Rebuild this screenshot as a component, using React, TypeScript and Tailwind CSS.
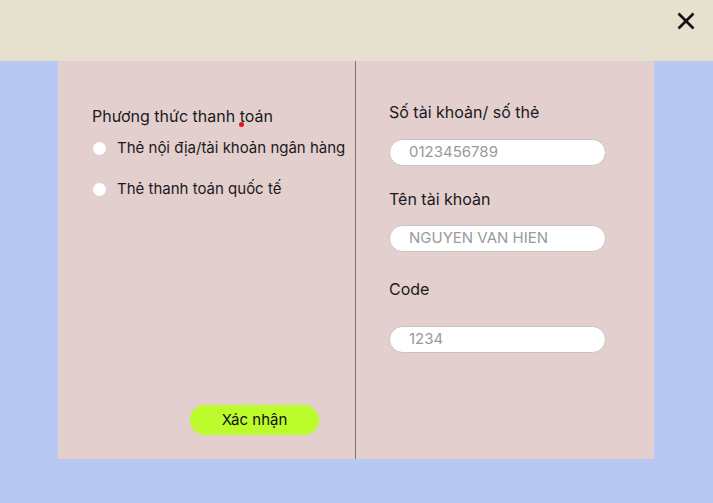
export default function App() {
  return (
    <div
      className="flex h-[503px] w-[713px] flex-col bg-[#b7c9f3] text-[#1a1a1a]"
      style={{ fontFamily: "Inter, 'Noto Sans', sans-serif" }}
    >
      <header className="flex h-[61px] shrink-0 justify-end bg-[#e6e0ce] pr-[17px] pt-[11px]">
        <button type="button" aria-label="Đóng" className="h-[20px] w-[20px] text-[#111]">
          <svg viewBox="0 0 20 20" className="h-[20px] w-[20px]" fill="none" stroke="currentColor" strokeWidth="2.6">
            <path d="M2.5 2.5 17.5 17.5" />
            <path d="M17.5 2.5 2.5 17.5" />
          </svg>
        </button>
      </header>

      <main className="mx-[58px] flex h-[398px] w-[596px] bg-[#e4cfcf]">
        <section className="relative flex w-[297px] flex-col pl-[34px] pt-[46px]">
          <h2 className="text-[16px] leading-[19px]">Phương thức thanh toán</h2>
          <span className="absolute left-[181px] top-[61px] h-[5px] w-[5px] rounded-full bg-[#e8141b]" />

          <label className="mt-[13px] flex items-center text-[15px] leading-[18px]">
            <span className="ml-[1px] h-[13px] w-[13px] rounded-full bg-white" />
            <span className="ml-[11px]">Thẻ nội địa/tài khoản ngân hàng</span>
          </label>
          <label className="mt-[23px] flex items-center text-[15px] leading-[18px]">
            <span className="ml-[1px] h-[13px] w-[13px] rounded-full bg-white" />
            <span className="ml-[11px]">Thẻ thanh toán quốc tế</span>
          </label>

          <button
            type="button"
            className="ml-[98px] mt-auto mb-[24px] h-[30px] w-[129px] rounded-full bg-[#bcfb2c] text-[15px] text-[#111]"
          >
            Xác nhận
          </button>
        </section>

        <div className="w-px bg-[#7d7575]" />

        <section className="flex flex-1 flex-col pl-[33px] pt-[42px]">
          <label className="text-[16px] leading-[19px]">Số tài khoản/ số thẻ</label>
          <div className="mt-[17px] flex h-[27px] w-[217px] items-center rounded-full border border-[#c9c2c2] bg-white pl-[19px] text-[15px] text-[#9a9a9a]">
            0123456789
          </div>

          <label className="mt-[24px] text-[16px] leading-[19px]">Tên tài khoản</label>
          <div className="mt-[16px] flex h-[27px] w-[217px] items-center rounded-full border border-[#c9c2c2] bg-white pl-[19px] text-[15px] text-[#9a9a9a]">
            NGUYEN VAN HIEN
          </div>

          <label className="mt-[28px] text-[16px] leading-[19px]">Code</label>
          <div className="mt-[27px] flex h-[27px] w-[217px] items-center rounded-full border border-[#c9c2c2] bg-white pl-[19px] text-[15px] text-[#9a9a9a]">
            1234
          </div>
        </section>
      </main>
    </div>
  );
}
